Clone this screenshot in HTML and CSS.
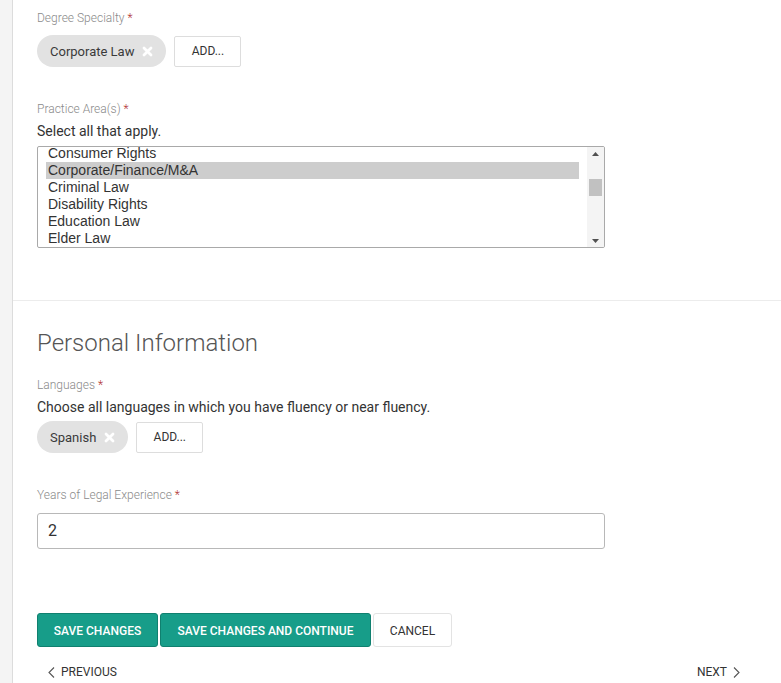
FILE: index.html
```html
<!DOCTYPE html>
<html>
<head>
<meta charset="utf-8">
<link rel="stylesheet" href="styles.css">
</head>
<body>
<div class="page">
  <div class="rail"></div>
  <main class="main">
    <section class="section first">
      <div class="label">Degree Specialty <span class="req">*</span></div>
      <div class="chips">
        <span class="chip">Corporate Law <svg class="x" width="11" height="11" viewBox="0 0 11 11"><path d="M2 2 L9 9 M9 2 L2 9" stroke="#fff" stroke-width="2.8" stroke-linecap="round"/></svg></span>
        <button class="add">ADD...</button>
      </div>

      <div class="label gap-lg">Practice Area(s) <span class="req">*</span></div>
      <div class="help">Select all that apply.</div>
      <div class="listbox">
        <div class="options">
          <div class="opt">Consumer Rights</div>
          <div class="opt sel">Corporate/Finance/M&amp;A</div>
          <div class="opt">Criminal Law</div>
          <div class="opt">Disability Rights</div>
          <div class="opt">Education Law</div>
          <div class="opt">Elder Law</div>
        </div>
        <div class="scrollbar">
          <svg class="arrow" width="7" height="4" viewBox="0 0 7 4"><path d="M0 4 L3.5 0 L7 4 Z" fill="#505050"/></svg>
          <div class="track"><div class="thumb"></div></div>
          <svg class="arrow" width="7" height="4" viewBox="0 0 7 4"><path d="M0 0 L3.5 4 L7 0 Z" fill="#505050"/></svg>
        </div>
      </div>
    </section>

    <section class="section second">
      <h2 class="heading">Personal Information</h2>
      <div class="label">Languages <span class="req">*</span></div>
      <div class="help">Choose all languages in which you have fluency or near fluency.</div>
      <div class="chips tight">
        <span class="chip">Spanish <svg class="x" width="11" height="11" viewBox="0 0 11 11"><path d="M2 2 L9 9 M9 2 L2 9" stroke="#fff" stroke-width="2.8" stroke-linecap="round"/></svg></span>
        <button class="add">ADD...</button>
      </div>

      <div class="label gap-lg">Years of Legal Experience <span class="req">*</span></div>
      <div class="input">2</div>

      <div class="actions">
        <button class="btn primary w1">SAVE CHANGES</button>
        <button class="btn primary w2">SAVE CHANGES AND CONTINUE</button>
        <button class="btn plain">CANCEL</button>
      </div>

      <nav class="pager">
        <span class="pg"><svg width="7" height="11" viewBox="0 0 7 11"><path d="M6 0.5 L1 5.5 L6 10.5" stroke="#555" stroke-width="1.1" fill="none"/></svg> PREVIOUS</span>
        <span class="pg">NEXT <svg width="7" height="11" viewBox="0 0 7 11"><path d="M1 0.5 L6 5.5 L1 10.5" stroke="#555" stroke-width="1.1" fill="none"/></svg></span>
      </nav>
    </section>
  </main>
</div>
</body>
</html>
```

FILE: styles.css
```css
* { box-sizing: border-box; }
html, body { margin: 0; padding: 0; background: #fff; }
body { font-family: Roboto, "Liberation Sans", sans-serif; color: #333; }

.page { display: flex; min-height: 683px; }
.rail { width: 13px; flex: none; background: #f4f4f4; border-right: 1px solid #dcdcdc; }
.main { flex: 1; }

.section { padding-left: 24px; }
.section.first { padding-top: 10px; padding-bottom: 52px; border-bottom: 1px solid #ececec; }
.section.second { padding-top: 27px; }

.label { font-size: 12px; line-height: 16px; color: #8a8a8a; font-weight: 300; }
.label .req { color: #b03030; }
.gap-lg { margin-top: 34px; }
.help { font-size: 14px; line-height: 20px; color: #333; margin-top: 4px; }

.chips { display: flex; gap: 8px; margin-top: 9px; align-items: center; }
.chips.tight { margin-top: 4px; }
.chip { display: inline-flex; align-items: center; gap: 8px; height: 32px; padding: 0 13px 0 13px; background: #e2e2e2; border-radius: 16px; font-size: 13px; color: #3a3a3a; }
.chip .x { display: block; }
.add { height: 31px; width: 67px; background: #fff; border: 1px solid #dddddd; border-radius: 2px; font-family: Roboto, "Liberation Sans", sans-serif; font-size: 12px; color: #333; padding: 0; }

.listbox { margin-top: 5px; width: 568px; height: 102px; border: 1px solid #a9a9a9; border-radius: 2px; display: flex; overflow: hidden; }
.options { flex: 1; padding: 0 8px 0 8px; margin-top: -2px; font-family: "Liberation Sans", Arial, sans-serif; font-size: 14px; color: #333; }
.opt { height: 17px; line-height: 17px; padding-left: 2px; }
.opt.sel { background: #cdcdcd; }
.scrollbar { width: 17px; flex: none; display: flex; flex-direction: column; align-items: center; padding: 5px 0 4px; background: #f4f4f4; }
.arrow { display: block; flex: none; }
.track { flex: 1; width: 100%; }
.thumb { margin: 23px 2px 0 2px; height: 17px; background: #c1c1c1; }

.heading { margin: 0 0 19px; font-size: 24px; line-height: 30px; font-weight: 300; color: #555; }

.input { margin-top: 10px; width: 568px; height: 36px; border: 1px solid #b8b8b8; border-radius: 3px; font-size: 16px; line-height: 34px; padding-left: 10px; color: #333; }

.actions { display: flex; gap: 2px; margin-top: 64px; }
.btn { height: 34px; border-radius: 3px; font-family: Roboto, "Liberation Sans", sans-serif; font-size: 12px; font-weight: 500; padding: 1px 0 0; }
.btn.primary { background: #179d89; border: 1px solid #10806f; color: #fff; }
.w1 { width: 121px; }
.w2 { width: 211px; }
.btn.plain { width: 79px; background: #fff; border: 1px solid #e3e3e3; color: #333; font-weight: 400; }

.pager { display: flex; justify-content: space-between; width: 703px; padding-left: 11px; margin-top: 17px; }
.pg { display: inline-flex; align-items: center; gap: 6px; font-size: 12px; color: #333; line-height: 16px; }
```
